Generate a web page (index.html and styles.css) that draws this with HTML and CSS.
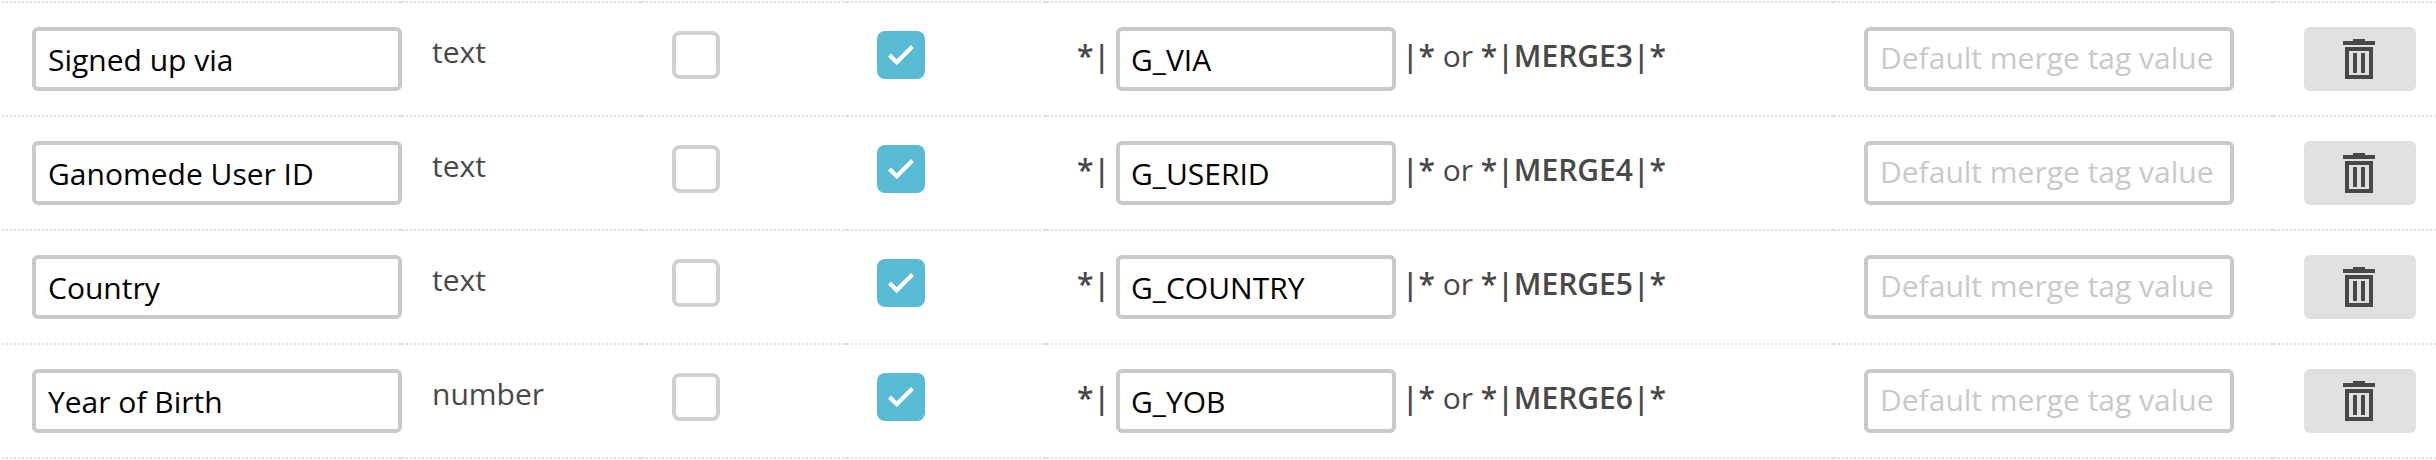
FILE: index.html
```html
<!DOCTYPE html>
<html lang="en">
<head>
<meta charset="utf-8">
<title>Audience fields</title>
<link rel="stylesheet" href="styles.css">
</head>
<body>
<svg class="defs" width="0" height="0">
  <symbol id="check" viewBox="0 0 48 48"><path d="M12.5 24l7.2 7.3 15.8-15.8" fill="none" stroke="#fff" stroke-width="4.2"/></symbol>
  <symbol id="trash" viewBox="0 0 32 40"><path fill="#484848" fill-rule="evenodd" d="M10 0h12v2h10v4H0V2h10zM2 8h28v32H2zM6 12v24h20V12zM10 14h4v20h-4zM18 14h4v20h-4z"/></symbol>
</svg>
<main class="fields">
  <div class="row">
    <div class="cell"><input class="input" type="text" value="Signed up via"></div>
    <div class="cell type">text</div>
    <div class="cell"><span class="box"></span></div>
    <div class="cell"><span class="box checked"><svg><use href="#check"/></svg></span></div>
    <div class="cell tag"><b>*|</b><input class="input" type="text" value="G_VIA"><span class="after"><b>|*</b> or <b>*|MERGE3|*</b></span></div>
    <div class="cell"><input class="input" type="text" placeholder="Default merge tag value"></div>
    <div class="cell"><button class="delete" aria-label="Delete"><svg><use href="#trash"/></svg></button></div>
  </div>
  <div class="row">
    <div class="cell"><input class="input" type="text" value="Ganomede User ID"></div>
    <div class="cell type">text</div>
    <div class="cell"><span class="box"></span></div>
    <div class="cell"><span class="box checked"><svg><use href="#check"/></svg></span></div>
    <div class="cell tag"><b>*|</b><input class="input" type="text" value="G_USERID"><span class="after"><b>|*</b> or <b>*|MERGE4|*</b></span></div>
    <div class="cell"><input class="input" type="text" placeholder="Default merge tag value"></div>
    <div class="cell"><button class="delete" aria-label="Delete"><svg><use href="#trash"/></svg></button></div>
  </div>
  <div class="row">
    <div class="cell"><input class="input" type="text" value="Country"></div>
    <div class="cell type">text</div>
    <div class="cell"><span class="box"></span></div>
    <div class="cell"><span class="box checked"><svg><use href="#check"/></svg></span></div>
    <div class="cell tag"><b>*|</b><input class="input" type="text" value="G_COUNTRY"><span class="after"><b>|*</b> or <b>*|MERGE5|*</b></span></div>
    <div class="cell"><input class="input" type="text" placeholder="Default merge tag value"></div>
    <div class="cell"><button class="delete" aria-label="Delete"><svg><use href="#trash"/></svg></button></div>
  </div>
  <div class="row">
    <div class="cell"><input class="input" type="text" value="Year of Birth"></div>
    <div class="cell type">number</div>
    <div class="cell"><span class="box"></span></div>
    <div class="cell"><span class="box checked"><svg><use href="#check"/></svg></span></div>
    <div class="cell tag"><b>*|</b><input class="input" type="text" value="G_YOB"><span class="after"><b>|*</b> or <b>*|MERGE6|*</b></span></div>
    <div class="cell"><input class="input" type="text" placeholder="Default merge tag value"></div>
    <div class="cell"><button class="delete" aria-label="Delete"><svg><use href="#trash"/></svg></button></div>
  </div>
</main>
</body>
</html>
```
FILE: styles.css
```css
* { box-sizing: border-box; }
body {
  margin: 0;
  background: #fff;
  color: #484848;
  font: 30px/48px "Open Sans", "Noto Sans", sans-serif;
  overflow: hidden;
}
.defs { display: none; }
.fields { padding: 1px 0 0 2px; }
.row {
  display: grid;
  grid-template-columns: 400px 240px 205px 200px 787px 440px 162px;
  height: 114px;
}
.row:last-child { height: 116px; }
.cell {
  --dots: repeating-linear-gradient(90deg, #dedede 0 2px, transparent 2px 4px);
  --dot: linear-gradient(#dedede, #dedede);
  padding: 26px 0 0 30px;
  background:
    var(--dot) 100% 0 / 2px 2px no-repeat,
    var(--dots) 0 0 / 100% 2px no-repeat;
}
.row:last-child .cell {
  background:
    var(--dot) 100% 0 / 2px 2px no-repeat,
    var(--dot) 100% 100% / 2px 2px no-repeat,
    var(--dots) 0 0 / 100% 2px no-repeat,
    var(--dots) 0 100% / 100% 2px no-repeat;
}
.input {
  display: block;
  width: 370px;
  height: 64px;
  margin: 0;
  padding: 0 8px 0 12px;
  border: 4px solid #c9c9c9;
  border-radius: 6px;
  background: #fff;
  color: #000;
  font: inherit;
}
.input::placeholder { color: #c9c9c9; opacity: 1; }
.input:placeholder-shown { padding-bottom: 3px; }
.cell.type { padding-top: 27px; }
.box {
  display: block;
  width: 48px;
  height: 48px;
  margin-top: 4px;
  border: 4px solid #cfcfcf;
  border-radius: 8px;
}
.box.checked { border: 0; background: #59bad4; }
.box svg { display: block; width: 48px; height: 48px; }
.tag { display: flex; }
.tag b { font-weight: 600; }
.tag > b { width: 39px; margin-top: 5px; }
.tag .input { width: 280px; padding-left: 11px; }
.after { margin: 5px 0 0 6px; white-space: pre; }
.delete {
  display: flex;
  width: 112px;
  height: 64px;
  padding: 12px 0 0 39px;
  border: 0;
  border-radius: 6px;
  background: #e0e0e0;
}
.delete svg { width: 32px; height: 40px; }
```
